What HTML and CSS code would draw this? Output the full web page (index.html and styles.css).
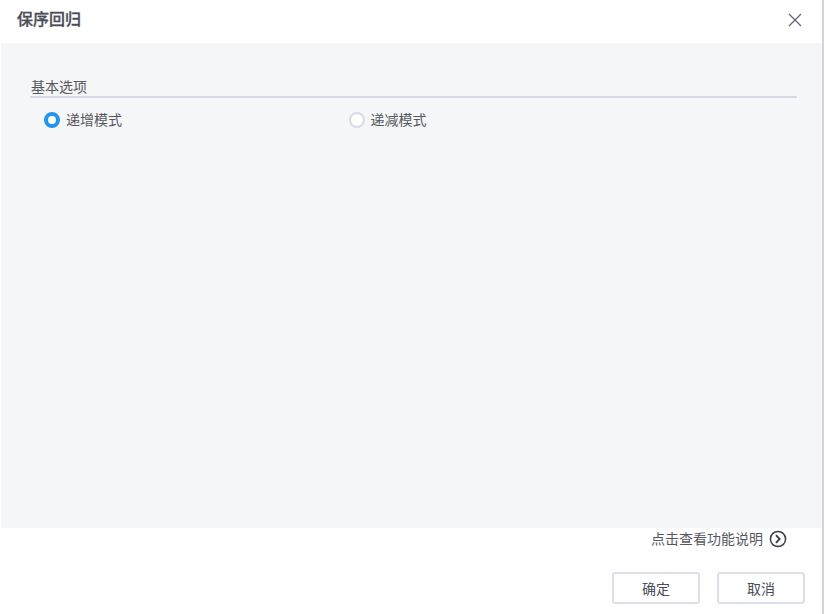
FILE: index.html
```
<!DOCTYPE html>
<html lang="zh-CN">
<head>
<meta charset="utf-8">
<title>保序回归</title>
<link rel="stylesheet" href="styles.css">
</head>
<body>
<div class="dialog">
  <header class="header">
    <h1 class="title">保序回归</h1>
    <svg class="close" width="14" height="14" viewBox="0 0 14 14"><path d="M1 1L13 13M13 1L1 13" fill="none" stroke="#5f6270" stroke-width="1.2"/></svg>
  </header>
  <main class="body">
    <div class="section-title">基本选项</div>
    <div class="options">
      <label class="option"><span class="radio radio-on"></span>递增模式</label>
      <label class="option"><span class="radio"></span>递减模式</label>
    </div>
  </main>
  <div class="help">
    <span>点击查看功能说明</span>
    <svg class="help-icon" width="18" height="18" viewBox="0 0 18 18"><circle cx="9" cy="9" r="7.6" fill="none" stroke="#3c3f4a" stroke-width="1.5"/><path d="M7 5.2L10.6 9L7 12.8" fill="none" stroke="#3c3f4a" stroke-width="1.9"/></svg>
  </div>
  <footer class="footer">
    <button class="btn">确定</button>
    <button class="btn">取消</button>
  </footer>
</div>
</body>
</html>
```
FILE: styles.css
```
* { box-sizing: border-box; }
html, body { margin: 0; padding: 0; background: #fff; }
body { width: 824px; height: 614px; overflow: hidden; font-family: "Liberation Sans", "Noto Sans CJK SC", sans-serif; color: #4a4d57; }
.dialog { width: 824px; height: 614px; display: flex; flex-direction: column; border-right: 2px solid #d4d4d6; }
.header { height: 43px; flex: none; display: flex; align-items: center; justify-content: space-between; padding: 0 20px 3px 17px; }
.title { margin: 0; font-size: 16px; font-weight: 500; color: #4a4d57; line-height: 20px; -webkit-text-stroke: 0.3px #4a4d57; }
.close { display: block; }
.body { height: 485px; flex: none; margin-left: 1px; background: #f5f6f8; padding: 35px 25px 0 29px; }
.section-title { font-size: 14px; line-height: 18px; height: 20px; padding-left: 1px; border-bottom: 2px solid #d6d9e4; color: #55585f; }
.options { display: flex; padding: 12px 0 0 14px; }
.option { width: 304.5px; display: flex; align-items: center; gap: 6px; font-size: 14px; line-height: 20px; color: #55585f; }
.radio { width: 16px; height: 16px; border-radius: 50%; border: 2px solid #d8dbe4; background: #fff; flex: none; }
.radio-on { border: 4.5px solid #2196f0; }
.help { height: 21px; flex: none; display: flex; justify-content: flex-end; align-items: center; gap: 6px; padding-right: 35px; font-size: 14px; line-height: 20px; color: #55585f; }
.help-icon { display: block; margin-top: 1px; }
.footer { flex: 1; display: flex; justify-content: flex-end; gap: 17px; padding: 23px 17px 0 0; }
.btn { width: 88px; height: 32px; background: #fff; border: 2px solid #dde0ea; border-radius: 3px; font: 14px "Liberation Sans", "Noto Sans CJK SC", sans-serif; color: #4a4d57; padding: 0; }
```
